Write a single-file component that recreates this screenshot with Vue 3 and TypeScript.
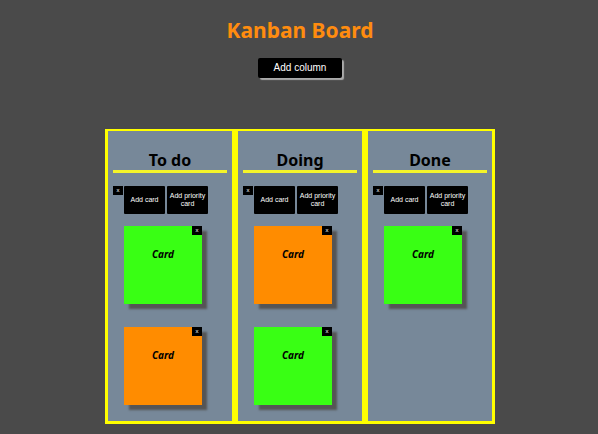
<script setup lang="ts">
import { ref } from 'vue'

interface Card {
  id: number
  text: string
  priority: boolean
}

interface Column {
  id: number
  name: string
  cards: Card[]
}

let nextId = 10

const columns = ref<Column[]>([
  {
    id: 1,
    name: 'To do',
    cards: [
      { id: 4, text: 'Card', priority: false },
      { id: 5, text: 'Card', priority: true },
    ],
  },
  {
    id: 2,
    name: 'Doing',
    cards: [
      { id: 6, text: 'Card', priority: true },
      { id: 7, text: 'Card', priority: false },
    ],
  },
  { id: 3, name: 'Done', cards: [{ id: 8, text: 'Card', priority: false }] },
])

function addColumn(): void {
  columns.value.push({ id: nextId++, name: 'Column', cards: [] })
}

function removeColumn(id: number): void {
  columns.value = columns.value.filter((column) => column.id !== id)
}

function addCard(column: Column, priority: boolean): void {
  column.cards.push({ id: nextId++, text: 'Card', priority })
}

function removeCard(column: Column, id: number): void {
  column.cards = column.cards.filter((card) => card.id !== id)
}
</script>

<template>
  <main class="board">
    <h1 class="title">Kanban Board</h1>
    <button class="add-column" type="button" @click="addColumn">Add column</button>
    <div class="columns">
      <section v-for="column in columns" :key="column.id" class="column">
        <h2 class="column-name">{{ column.name }}</h2>
        <div class="actions">
          <button class="remove" type="button" @click="removeColumn(column.id)">x</button>
          <button class="add-card" type="button" @click="addCard(column, false)">Add card</button>
          <button class="add-card" type="button" @click="addCard(column, true)">Add priority card</button>
        </div>
        <ul class="cards">
          <li v-for="card in column.cards" :key="card.id" class="card" :class="{ priority: card.priority }">
            <button class="remove" type="button" @click="removeCard(column, card.id)">x</button>
            <p class="card-text">{{ card.text }}</p>
          </li>
        </ul>
      </section>
    </div>
  </main>
</template>

<style>
body {
  margin: 0;
  background: #4a4a4a;
}
</style>

<style scoped>
.board {
  display: flex;
  flex-direction: column;
  align-items: center;
  padding: 14px 0 10px 2px;
  font-family: 'Noto Sans', 'Open Sans', sans-serif;
  color: #000;
}

.title {
  margin: 0;
  font-size: 21px;
  line-height: 32px;
  font-weight: 700;
  color: #ff8c0f;
}

button {
  border: 0;
  padding: 0;
  background: #000;
  color: #fff;
  font-family: 'Liberation Sans', Arial, sans-serif;
  cursor: pointer;
}

.add-column {
  margin-top: 12px;
  padding: 0 16px;
  font-size: 10px;
  line-height: 20px;
  border-radius: 2px;
  box-shadow: 2px 2px 1px #aaa;
}

.columns {
  display: flex;
  margin-top: 51px;
}

.column {
  box-sizing: border-box;
  width: 130px;
  padding: 19px 5px 16px;
  border: 3px solid #ffff00;
  border-top-width: 2px;
  background: #778899;
}

.column-name {
  margin: 0;
  border-bottom: 3px solid #f5f52a;
  font-size: 16px;
  line-height: 20px;
  font-weight: 700;
  text-align: center;
}

.actions {
  display: flex;
  align-items: flex-start;
  margin-top: 13px;
}

.remove {
  width: 10px;
  height: 9px;
  font-size: 6px;
  line-height: 9px;
}

.add-card {
  width: 41px;
  height: 28px;
  margin-left: 1px;
  font-size: 7px;
  line-height: 8px;
  border-radius: 1px;
}

.add-card + .add-card {
  margin-left: 2px;
}

.cards {
  display: flex;
  flex-direction: column;
  gap: 23px;
  margin: 12px 0 0;
  padding: 0 0 0 11px;
  list-style: none;
}

.card {
  display: flex;
  flex-direction: column;
  width: 78px;
  height: 78px;
  background: #39ff14;
  box-shadow: 5px 5px 2px #555;
}

.card.priority {
  background: #ff8c00;
}

.card .remove {
  align-self: flex-end;
}

.card-text {
  margin: 12px 0 0;
  font-size: 10px;
  line-height: 14px;
  font-style: italic;
  font-weight: 700;
  text-align: center;
}
</style>
